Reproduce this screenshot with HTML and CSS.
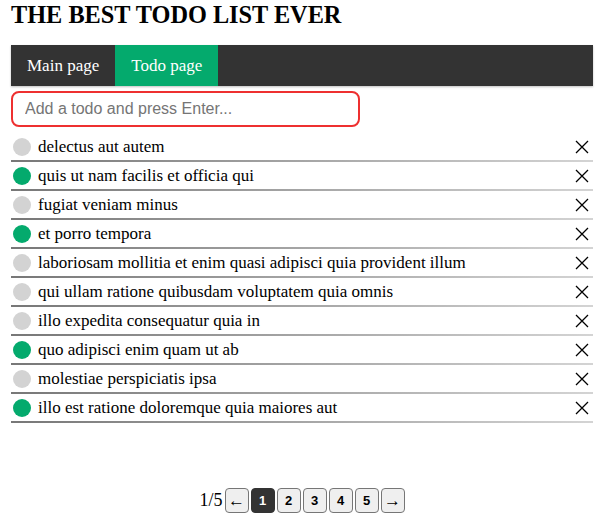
FILE: index.html
```html
<!DOCTYPE html>
<html>
<head>
<meta charset="utf-8">
<link rel="stylesheet" href="styles.css">
</head>
<body>
<h1 class="title">THE BEST TODO LIST EVER</h1>
<nav class="topnav">
  <a class="tab">Main page</a>
  <a class="tab active">Todo page</a>
</nav>
<input class="new-todo" type="text" placeholder="Add a todo and press Enter...">
<ul class="todos">
  <li class="todo"><span class="dot"></span><span class="label">delectus aut autem</span><span class="del"><svg viewBox="0 0 14 14"><path d="M1 1L13 13M13 1L1 13"/></svg></span></li>
  <li class="todo"><span class="dot done"></span><span class="label">quis ut nam facilis et officia qui</span><span class="del"><svg viewBox="0 0 14 14"><path d="M1 1L13 13M13 1L1 13"/></svg></span></li>
  <li class="todo"><span class="dot"></span><span class="label">fugiat veniam minus</span><span class="del"><svg viewBox="0 0 14 14"><path d="M1 1L13 13M13 1L1 13"/></svg></span></li>
  <li class="todo"><span class="dot done"></span><span class="label">et porro tempora</span><span class="del"><svg viewBox="0 0 14 14"><path d="M1 1L13 13M13 1L1 13"/></svg></span></li>
  <li class="todo"><span class="dot"></span><span class="label">laboriosam mollitia et enim quasi adipisci quia provident illum</span><span class="del"><svg viewBox="0 0 14 14"><path d="M1 1L13 13M13 1L1 13"/></svg></span></li>
  <li class="todo"><span class="dot"></span><span class="label">qui ullam ratione quibusdam voluptatem quia omnis</span><span class="del"><svg viewBox="0 0 14 14"><path d="M1 1L13 13M13 1L1 13"/></svg></span></li>
  <li class="todo"><span class="dot"></span><span class="label">illo expedita consequatur quia in</span><span class="del"><svg viewBox="0 0 14 14"><path d="M1 1L13 13M13 1L1 13"/></svg></span></li>
  <li class="todo"><span class="dot done"></span><span class="label">quo adipisci enim quam ut ab</span><span class="del"><svg viewBox="0 0 14 14"><path d="M1 1L13 13M13 1L1 13"/></svg></span></li>
  <li class="todo"><span class="dot"></span><span class="label">molestiae perspiciatis ipsa</span><span class="del"><svg viewBox="0 0 14 14"><path d="M1 1L13 13M13 1L1 13"/></svg></span></li>
  <li class="todo"><span class="dot done"></span><span class="label">illo est ratione doloremque quia maiores aut</span><span class="del"><svg viewBox="0 0 14 14"><path d="M1 1L13 13M13 1L1 13"/></svg></span></li>
</ul>
<div class="pager">
  <span class="count">1/5</span>
  <button class="pbtn arrow">&larr;</button>
  <button class="pbtn current">1</button>
  <button class="pbtn">2</button>
  <button class="pbtn">3</button>
  <button class="pbtn">4</button>
  <button class="pbtn">5</button>
  <button class="pbtn arrow">&rarr;</button>
</div>
</body>
</html>
```

FILE: styles.css
```css
html, body {
  margin: 0;
  padding: 0;
  background: #fff;
}
body {
  padding: 0 7px 0 11px;
  font-family: "Liberation Serif", "Times New Roman", serif;
  color: #000;
}
.title {
  margin: 0;
  padding-top: 1px;
  font-size: 24.3px;
  line-height: 28px;
  font-weight: bold;
}
.topnav {
  margin-top: 16px;
  display: flex;
  height: 41px;
  background: #333;
  box-shadow: 0 1px 2px rgba(0,0,0,0.25);
}
.tab {
  padding: 0 16px;
  line-height: 42px;
  color: #fff;
  font-size: 17px;
}
.tab.active {
  background: #04aa6d;
}
.new-todo {
  display: block;
  box-sizing: border-box;
  margin-top: 5px;
  width: 349px;
  height: 36px;
  border: 2px solid #ee3030;
  border-radius: 8px;
  padding: 0 12px;
  font-family: "Liberation Sans", Arial, sans-serif;
  font-size: 16px;
  outline: none;
}
.new-todo::placeholder {
  color: #757575;
}
.todos {
  list-style: none;
  margin: 6px 0 0;
  padding: 0;
}
.todo {
  display: flex;
  align-items: center;
  height: 27px;
  border-bottom: 2px solid transparent;
  border-image: linear-gradient(to right, #777, #d4d4d4) 1;
  font-size: 17px;
}
.dot {
  flex: none;
  width: 18px;
  height: 18px;
  margin-left: 2px;
  margin-right: 7px;
  border-radius: 50%;
  background: #d3d3d3;
}
.dot.done {
  background: #04aa6d;
}
.label {
  flex: 1;
  white-space: nowrap;
}
.del {
  flex: none;
  width: 14px;
  height: 14px;
  margin-right: 4px;
  display: flex;
}
.del svg {
  width: 14px;
  height: 14px;
  stroke: #000;
  stroke-width: 1.3;
  fill: none;
}
.pager {
  margin-top: 65px;
  display: flex;
  justify-content: center;
  align-items: center;
  gap: 2px;
}
.count {
  font-size: 18px;
}
.pbtn {
  box-sizing: border-box;
  width: 24px;
  height: 25px;
  padding: 0;
  border: 1px solid #767676;
  border-radius: 4px;
  background: #efefef;
  color: #000;
  font-family: "Liberation Sans", Arial, sans-serif;
  font-size: 13px;
  font-weight: bold;
}
.pbtn.arrow {
  font-weight: normal;
  font-size: 17px;
  line-height: 1;
}
.pbtn.current {
  background: #333;
  color: #fff;
  border-color: #333;
}
```
